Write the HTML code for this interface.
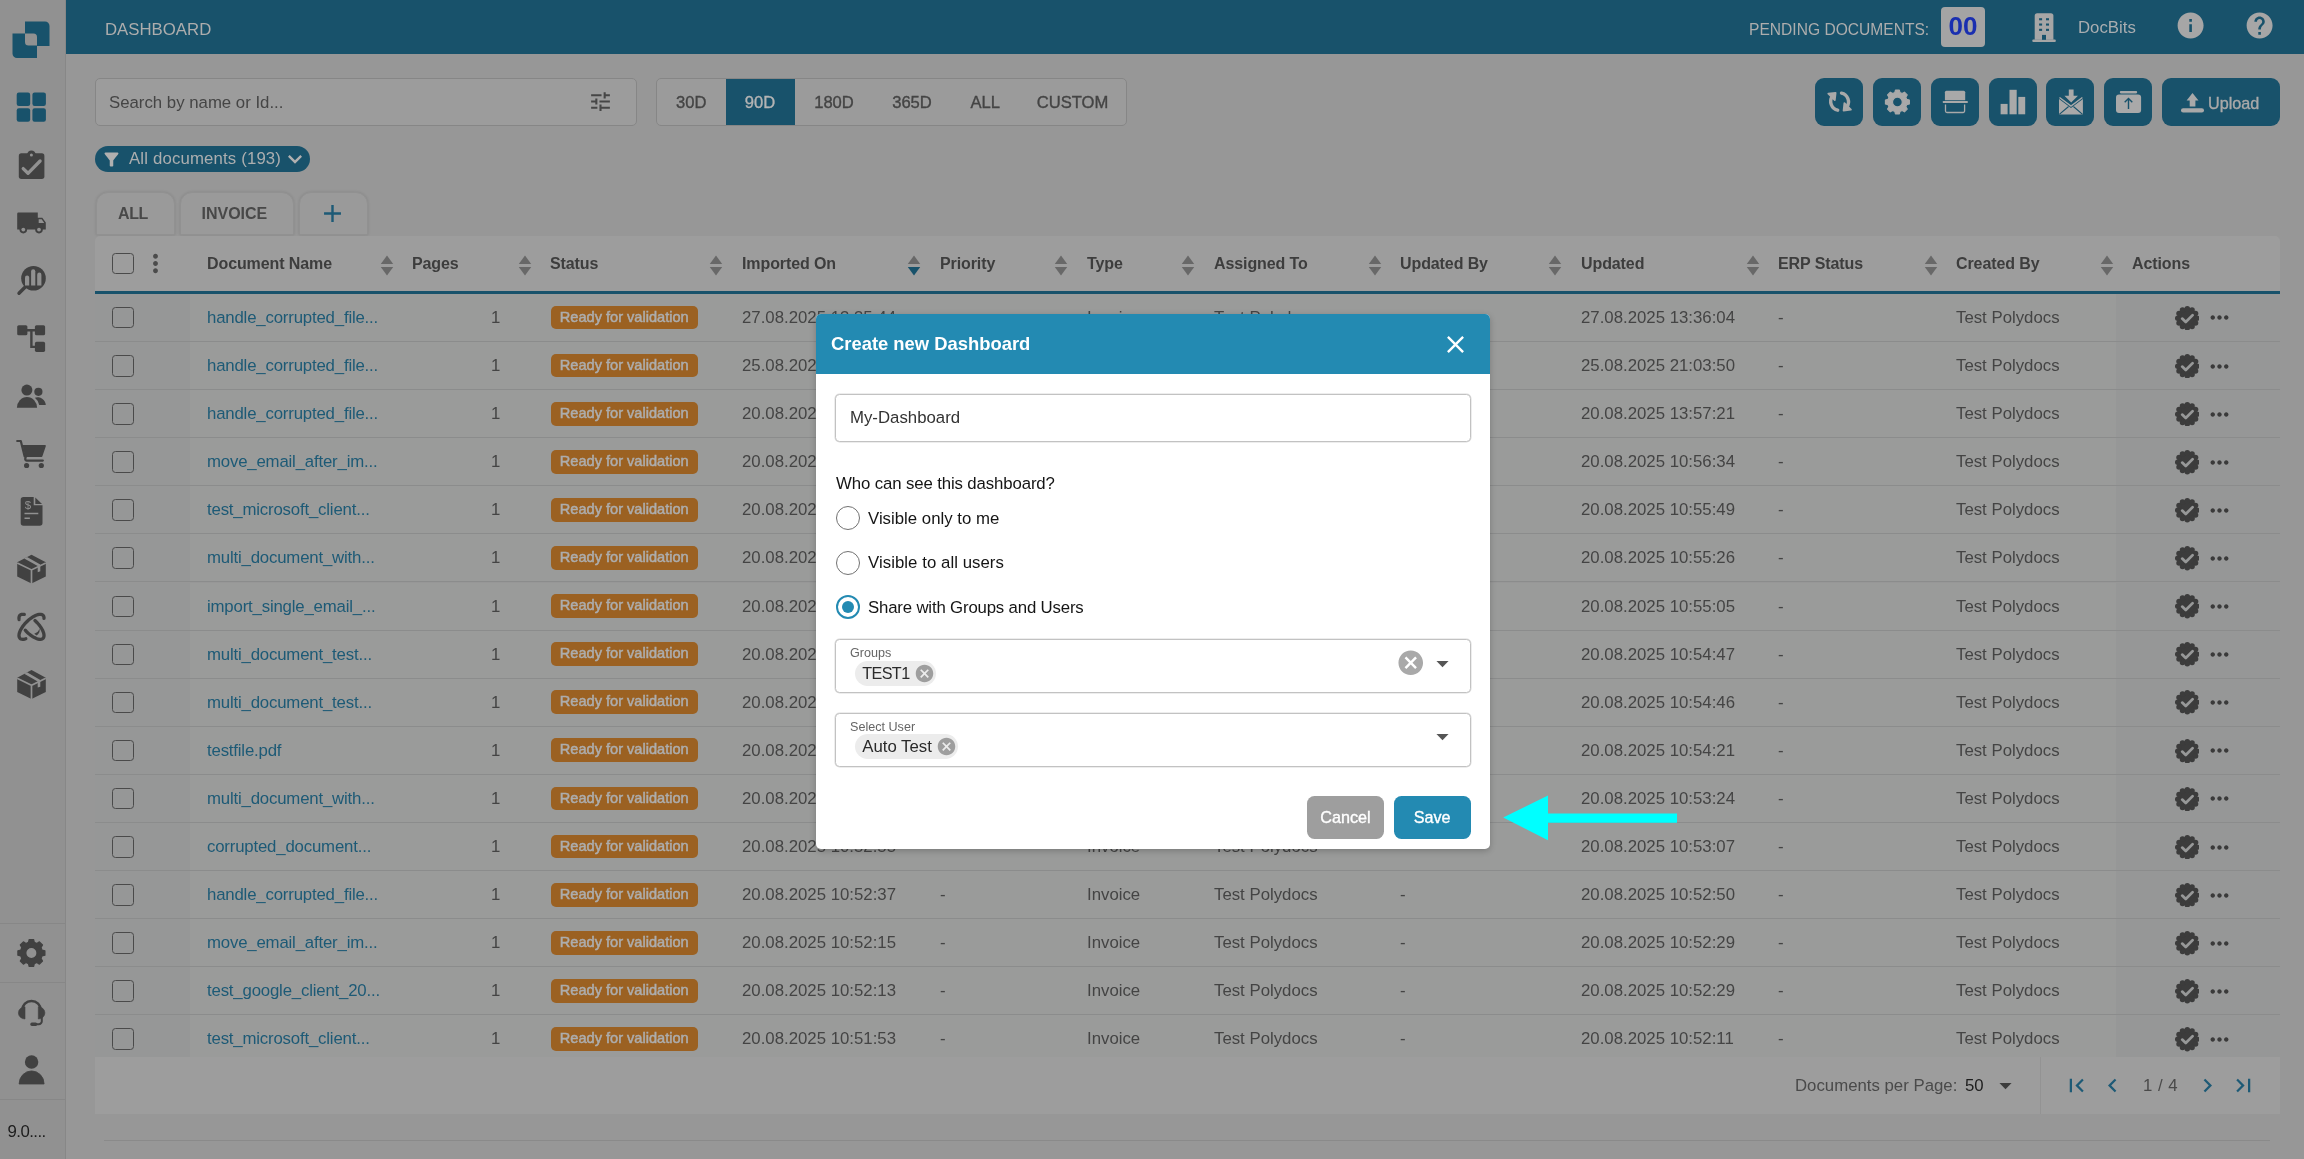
<!DOCTYPE html>
<html lang="en"><head><meta charset="utf-8"><title>Dashboard</title>
<style>
*{box-sizing:border-box}
html,body{margin:0;padding:0}
body{width:2304px;height:1159px;overflow:hidden;background:#979797;font-family:"Liberation Sans",sans-serif;color:#444;position:relative;font-size:16.8px}
.abs,.ic,.t{position:absolute}
.ic{display:block}
.t{white-space:nowrap;line-height:20px}
#side{left:0;top:0;width:66px;height:1159px;background:#919191;border-right:1px solid #878787}
#top{left:66px;top:0;width:2238px;height:54px;background:#18526b}
.box{position:absolute;border:1px solid #868686;border-radius:5px;background:#9c9c9c}
.abtn{position:absolute;top:78px;width:48px;height:48px;border-radius:9px;background:#18526b}
.tab{position:absolute;top:192px;height:43.300px;border:1px solid #919191;border-radius:12px 12px 0 0;background:#9a9a9a;box-shadow:0 0 3px rgba(0,0,0,.12)}
.th{font-weight:bold;font-size:16px;color:#3d3d3d;letter-spacing:-.1px}
.row{position:absolute;left:95px;width:2185px;height:48.1px;background:#9a9b9a;border-bottom:1px solid #8b8c8c}
.row .fz{position:absolute;top:0;height:100%;background:#969797}
.cb{position:absolute;width:21.6px;height:21.6px;border:1.800px solid #4a4a4a;border-radius:3.500px}
.badge{position:absolute;left:455.500px;top:11.700px;width:147.500px;height:23.800px;border-radius:5px;background:#9b6122;color:#adadad;font-weight:normal;-webkit-text-stroke:.5px currentColor;font-size:14.600px;line-height:23.800px;text-align:center;white-space:nowrap}
.c{position:absolute;top:14px;line-height:20px;white-space:nowrap}
.lk{color:#1d5a76;letter-spacing:-.18px}
.med{font-weight:normal;-webkit-text-stroke:.35px currentColor}
</style></head><body><div id="app" style="position:absolute;left:0;top:0;width:2304px;height:1159px;will-change:transform">
<div id="side" class="abs"></div><div class="abs" style="left:0;top:923px;width:65px;height:1px;background:#878787"></div><div class="abs" style="left:0;top:982px;width:65px;height:1px;background:#878787"></div><div class="abs" style="left:0;top:1099px;width:65px;height:1px;background:#878787"></div><div class="t" style="left:7.500px;top:1122px;color:#1c1c1c;font-size:16.8px;letter-spacing:-.55px">9.0....</div><svg class="ic" style="left:12px;top:21px;width:38px;height:38px" viewBox="0 0 38 38">
<path d="M13 0.500H33a4.500 4.500 0 0 1 4.500 4.500V25H25V16a3.500 3.500 0 0 0-3.500-3.500H13z" fill="#18526b"/>
<path d="M0.500 12.500H13V21a3.500 3.500 0 0 0 3.500 3.500H25V37H5a4.500 4.500 0 0 1-4.500-4.500z" fill="#18526b"/></svg><svg class="ic" style="left:0;top:0;width:66px;height:1159px" viewBox="0 0 66 1159"><rect x="16.7" y="92.5" width="13.500" height="13.500" rx="2.200" fill="#18526b"/><rect x="32.4" y="92.5" width="13.500" height="13.500" rx="2.200" fill="#18526b"/><rect x="16.7" y="108.2" width="13.500" height="13.500" rx="2.200" fill="#18526b"/><rect x="32.4" y="108.2" width="13.500" height="13.500" rx="2.200" fill="#18526b"/><circle cx="31.400" cy="154.800" r="4.400" fill="#414141"/><rect x="18.800" y="153.300" width="25.600" height="25.600" rx="2.600" fill="#414141"/><circle cx="31.400" cy="155" r="1.500" fill="#919191"/><path d="M23.200 168.600L28 173.300L40.100 161" stroke="#919191" stroke-width="3.300" fill="none" stroke-linecap="round" stroke-linejoin="round"/><path d="M18.400 212.600H37.800V217.800H42.300L45.800 222.600V229.400H17.200V213.800a1.200 1.200 0 0 1 1.200-1.200z" fill="#414141"/><path d="M38.700 219.300H41.700L44.200 222.900H38.700z" fill="#919191"/><circle cx="23.3" cy="229.600" r="3.800" fill="#414141"/><circle cx="23.3" cy="229.600" r="1.900" fill="#919191"/><circle cx="39" cy="229.600" r="3.800" fill="#414141"/><circle cx="39" cy="229.600" r="1.900" fill="#919191"/><circle cx="33.500" cy="278.200" r="12.300" fill="#414141"/><path d="M19 293.200L25.500 286.800" stroke="#414141" stroke-width="3.400" stroke-linecap="round"/><path d="M25 285.400V277.5a2.100 2.100 0 0 1 4.200 0V285.400z" fill="#919191"/><path d="M31.1 285.400V271.3a2.100 2.100 0 0 1 4.200 0V285.400z" fill="#919191"/><path d="M37.2 285.400V274.70000000000005a2.100 2.100 0 0 1 4.200 0V285.400z" fill="#919191"/><rect x="17.2" y="325.2" width="10.200" height="10.100" rx="1.600" fill="#414141"/><rect x="34.9" y="325.2" width="10.200" height="10.100" rx="1.600" fill="#414141"/><rect x="34.9" y="341.8" width="10.200" height="10.100" rx="1.600" fill="#414141"/><path d="M27 330.200H35.500M31.400 330.200V346.900H35.500" stroke="#414141" stroke-width="2.400" fill="none"/><circle cx="26.900" cy="390.100" r="5.500" fill="#414141"/><path d="M16.900 407.800a10.100 10.800 0 0 1 20.200 0z" fill="#414141"/><circle cx="38.400" cy="391.800" r="4.100" fill="#414141"/><path d="M34.900 397.700a8.300 8 0 0 1 10.900 7.200H39.200a12.500 12 0 0 0-4.300-7.200z" fill="#414141"/><path d="M17.200 441H20.800L24.600 456.300" stroke="#414141" stroke-width="2.200" fill="none" stroke-linecap="round" stroke-linejoin="round"/><path d="M22.500 445H44.800a1 1 0 0 1 1 1.300L42.400 456.200a1 1 0 0 1-1 .7H25.400z" fill="#414141"/><path d="M25.800 456.500L25.300 458.600a1.600 1.600 0 0 0 1.600 2H42.800" stroke="#414141" stroke-width="2.300" fill="none" stroke-linecap="round"/><circle cx="26.600" cy="465.500" r="2.600" fill="#414141"/><circle cx="41.300" cy="465.500" r="2.600" fill="#414141"/><path d="M23.500 496.900H33.700V505.300H42.500V523a2.800 2.800 0 0 1-2.800 2.800H23.500a2.800 2.800 0 0 1-2.800-2.800V499.700a2.800 2.800 0 0 1 2.800-2.800z" fill="#414141"/><path d="M35.300 497.500L42 503.900H35.300z" fill="#414141"/><path d="M24.500 513.500H38.300M24.500 518.200H29.900" stroke="#919191" stroke-width="1.400"/><text x="28" y="508.600" font-family="Liberation Sans, sans-serif" font-size="11.500" fill="#919191" text-anchor="middle">$</text><path d="M17.200 562.3L31.500 554.7L45.800 562.3V576.6L31.500 583.5L17.200 576.6z" fill="#414141"/><path d="M17.200 562.9L31.500 569.9L45.800 562.9M31.500 569.9V584" stroke="#919191" stroke-width="1.700" fill="none"/><path d="M24.200 558.4L27 556.9L40.300 564.5V571.3L37.700 572.2V566.1z" fill="#919191"/><path d="M17.200 677.7L31.500 670.1L45.800 677.7V692.0L31.500 698.9L17.200 692.0z" fill="#414141"/><path d="M17.200 678.3L31.500 685.3L45.800 678.3M31.500 685.3V699.4" stroke="#919191" stroke-width="1.700" fill="none"/><path d="M24.200 673.8L27 672.3L40.300 679.9V686.7L37.700 687.6V681.5z" fill="#919191"/><path d="M25.81 638.77L24.65 639.09L23.57 639.27L22.58 639.31L21.70 639.21L20.92 638.97L20.27 638.58L19.74 638.07L19.35 637.42L19.10 636.65L18.99 635.77L19.02 634.79L19.20 633.72L19.51 632.57L19.96 631.35L20.55 630.08L21.25 628.77L22.08 627.44L23.01 626.10L24.04 624.77L25.16 623.47L26.35 622.20L27.59 620.98L28.88 619.83L30.20 618.76L31.54 617.79L32.87 616.91L34.19 616.15L35.48 615.51L36.73 615.00L37.91 614.62L39.02 614.38L40.04 614.29L40.97 614.33L41.79 614.52L42.49 614.85L43.07 615.32L43.51 615.91L43.82 616.64L43.98 617.47L44.01 618.42" stroke="#414141" stroke-width="3.300" fill="none" stroke-linecap="round"/><path d="M34.94 620.55L35.94 621.49L36.92 622.47L37.85 623.48L38.74 624.51L39.58 625.56L40.36 626.62L41.07 627.67L41.72 628.73L42.29 629.77L42.79 630.78L43.21 631.77L43.54 632.73L43.79 633.64L43.94 634.50L44.01 635.30L43.99 636.05L43.88 636.73L43.68 637.34L43.40 637.87L43.03 638.33L42.57 638.70L42.04 638.98L41.43 639.18L40.75 639.29L40.00 639.31L39.20 639.24L38.34 639.09L37.43 638.84L36.47 638.51L35.48 638.09L34.47 637.59L33.43 637.02L32.37 636.37L31.32 635.66L30.26 634.88L29.21 634.04L28.18 633.15L27.17 632.22L26.19 631.24L25.25 630.24" stroke="#414141" stroke-width="3.300" fill="none" stroke-linecap="round"/><path d="M19.14 619.61L19.09 619.33L19.05 619.05L19.02 618.78L19.00 618.51L18.99 618.26L18.98 618.00L18.99 617.76L19.01 617.52L19.04 617.29L19.08 617.07L19.12 616.85L19.18 616.64L19.25 616.44L19.32 616.25L19.41 616.07L19.50 615.89L19.61 615.72L19.72 615.56L19.84 615.41L19.97 615.27L20.11 615.14L20.26 615.02L20.42 614.91L20.59 614.80L20.77 614.71L20.95 614.62L21.14 614.55L21.34 614.48L21.55 614.42L21.77 614.38L21.99 614.34L22.22 614.31L22.46 614.29L22.70 614.28L22.96 614.29L23.21 614.30L23.48 614.32L23.75 614.35L24.03 614.39L24.31 614.44" stroke="#414141" stroke-width="3.300" fill="none" stroke-linecap="round"/><path d="M34.200 633.700Q38.600 632.600 39.400 628.600Q40.400 633 36.700 635.400z" fill="#414141"/></svg><svg class="ic" style="left:8px;top:929px;width:48px;height:48px" viewBox="8 929 48 48"><path d="M42.00 950.06L44.92 950.81L44.92 955.19L42.00 955.94L40.97 958.42L42.51 961.01L39.41 964.11L36.82 962.57L34.34 963.60L33.59 966.52L29.21 966.52L28.46 963.60L25.98 962.57L23.39 964.11L20.29 961.01L21.83 958.42L20.80 955.94L17.88 955.19L17.88 950.81L20.80 950.06L21.83 947.58L20.29 944.99L23.39 941.89L25.98 943.43L28.46 942.40L29.21 939.48L33.59 939.48L34.34 942.40L36.82 943.43L39.41 941.89L42.51 944.99L40.97 947.58zM25.80 953a5.6 5.6 0 1 0 11.2 0a5.6 5.6 0 1 0 -11.2 0z" fill="#414141" fill-rule="evenodd" stroke="#414141" stroke-width="1.200" stroke-linejoin="round"/></svg><svg class="ic" style="left:8px;top:990px;width:48px;height:100px" viewBox="8 990 48 100"><path d="M22.200 1010.300a9.300 9.300 0 0 1 18.600 0" stroke="#414141" stroke-width="2.500" fill="none"/><path d="M25 1006.800V1019a6.600 6.100 0 0 1 0-12.200zM38.300 1006.800V1019a6.600 6.100 0 0 0 0-12.200z" fill="#414141" stroke="#414141" stroke-width=".6"/><path d="M41.800 1017V1021.200a3 3 0 0 1-3 3H33" stroke="#414141" stroke-width="2" fill="none"/><rect x="30.300" y="1022.500" width="7" height="3.400" rx="1.600" fill="#414141"/><circle cx="31.600" cy="1062" r="6.700" fill="#414141"/><path d="M19.100 1084a12.500 13.100 0 0 1 25 0z" fill="#414141" stroke="#414141" stroke-width=".8" stroke-linejoin="round"/></svg><div id="top" class="abs"></div><div class="t" style="left:105px;top:20px;font-size:16.8px;color:#adadad">DASHBOARD</div><div class="t" style="left:1749px;top:19.500px;font-size:15.6px;color:#adadad">PENDING DOCUMENTS:</div><div class="abs" style="left:1941px;top:7px;width:44px;height:40px;border-radius:4px;background:#a4a4a4"></div><div class="t" style="left:1941px;top:12px;width:44px;text-align:center;font-size:26px;font-weight:bold;color:#1a2fb0;line-height:28px">00</div><div class="t" style="left:2078px;top:17.500px;font-size:16.8px;color:#a9adb0">DocBits</div><svg class="ic" style="left:2030px;top:10px;width:28px;height:34px" viewBox="2030 10 28 34"><path d="M2037.200 13.300H2050.900a2.500 2.500 0 0 1 2.500 2.500V39.800H2034.700V15.800a2.500 2.500 0 0 1 2.500-2.500z" fill="#a6a6a6"/><rect x="2032.300" y="39.600" width="23.500" height="2.300" rx="1" fill="#a6a6a6"/><g fill="#18526b"><rect x="2039.100" y="18.200" width="3" height="2.100"/><rect x="2046" y="18.200" width="3" height="2.100"/><rect x="2039.100" y="23.500" width="3" height="2.100"/><rect x="2046" y="23.500" width="3" height="2.100"/><rect x="2039.100" y="28.800" width="3" height="2.100"/><rect x="2046" y="28.800" width="3" height="2.100"/><rect x="2042" y="34.900" width="4" height="4.900"/></g></svg><svg class="ic" style="left:2174.6px;top:9.6px;width:31.2px;height:31.2px;" viewBox="0 0 24 24" fill="#a6a6a6"><path d="M12 2C6.48 2 2 6.48 2 12s4.48 10 10 10 10-4.48 10-10S17.52 2 12 2zm1 15h-2v-6h2v6zm0-8h-2V7h2v2z"/></svg><svg class="ic" style="left:2243.9px;top:9.6px;width:31.2px;height:31.2px;" viewBox="0 0 24 24" fill="#a6a6a6"><path d="M12 2C6.48 2 2 6.48 2 12s4.48 10 10 10 10-4.48 10-10S17.52 2 12 2zm1 17h-2v-2h2v2zm2.07-7.75l-.9.92C13.45 12.9 13 13.5 13 15h-2v-.5c0-1.1.45-2.1 1.17-2.83l1.24-1.26c.37-.36.59-.86.59-1.41 0-1.1-.9-2-2-2s-2 .9-2 2H8c0-2.21 1.79-4 4-4s4 1.79 4 4c0 .88-.36 1.68-.93 2.25z"/></svg><div class="box" style="left:95px;top:78px;width:542px;height:48px"></div><div class="t" style="left:109px;top:92.700px;font-size:16.8px;color:#454545">Search by name or Id...</div><svg class="ic" style="left:588.0px;top:89.0px;width:25px;height:25px;" viewBox="0 0 24 24" fill="#464646"><path d="M3 17v2h6v-2H3zM3 5v2h10V5H3zm10 16v-2h8v-2h-8v-2h-2v6h2zM7 9v2H3v2h4v2h2V9H7zm14 4v-2H11v2h10zm-6-4h2V7h4V5h-4V3h-2v6z"/></svg><div class="box" style="left:656px;top:78px;width:471px;height:48px;background:#9b9b9b"></div><div class="abs" style="left:726px;top:79px;width:68.500px;height:46px;background:#18526b"></div><div class="t med" style="left:641.2px;top:92.800px;width:100px;text-align:center;font-size:16.600px;color:#444">30D</div><div class="t med" style="left:710px;top:92.800px;width:100px;text-align:center;font-size:16.600px;color:#b4b4b4">90D</div><div class="t med" style="left:784px;top:92.800px;width:100px;text-align:center;font-size:16.600px;color:#444">180D</div><div class="t med" style="left:862px;top:92.800px;width:100px;text-align:center;font-size:16.600px;color:#444">365D</div><div class="t med" style="left:935.2px;top:92.800px;width:100px;text-align:center;font-size:16.600px;color:#444">ALL</div><div class="t med" style="left:1022.5px;top:92.800px;width:100px;text-align:center;font-size:16.600px;color:#444">CUSTOM</div><div class="abtn" style="left:1815px"></div><div class="abtn" style="left:1873px"></div><div class="abtn" style="left:1931px"></div><div class="abtn" style="left:1988.5px"></div><div class="abtn" style="left:2046px"></div><div class="abtn" style="left:2104px"></div><div class="abtn" style="left:2162px;width:118px"></div><svg class="ic" style="left:1819px;top:82px;width:40px;height:40px" viewBox="0 0 40 40"><path d="M18.700 28.200A8.900 8.900 0 0 1 13.400 14.300" stroke="#a9a9a9" stroke-width="3.400" fill="none" stroke-linecap="round"/><path d="M9.300 11.700L16.600 10.800L15.800 18.200z" fill="#a9a9a9" stroke="#a9a9a9" stroke-width="1.800" stroke-linejoin="round"/><g transform="rotate(180 20.600 19.700)"><path d="M18.700 28.200A8.900 8.900 0 0 1 13.400 14.300" stroke="#a9a9a9" stroke-width="3.400" fill="none" stroke-linecap="round"/><path d="M9.300 11.700L16.600 10.800L15.800 18.200z" fill="#a9a9a9" stroke="#a9a9a9" stroke-width="1.800" stroke-linejoin="round"/></g></svg><svg class="ic" style="left:1873px;top:78px;width:48px;height:48px" viewBox="1873 78 48 48"><path d="M1906.75 99.41L1909.34 100.07L1909.34 103.93L1906.75 104.59L1905.84 106.78L1907.21 109.08L1904.48 111.81L1902.18 110.44L1899.99 111.35L1899.33 113.94L1895.47 113.94L1894.81 111.35L1892.62 110.44L1890.32 111.81L1887.59 109.08L1888.96 106.78L1888.05 104.59L1885.46 103.93L1885.46 100.07L1888.05 99.41L1888.96 97.22L1887.59 94.92L1890.32 92.19L1892.62 93.56L1894.81 92.65L1895.47 90.06L1899.33 90.06L1899.99 92.65L1902.18 93.56L1904.48 92.19L1907.21 94.92L1905.84 97.22zM1892.50 102a4.9 4.9 0 1 0 9.8 0a4.9 4.9 0 1 0 -9.8 0z" fill="#a9a9a9" fill-rule="evenodd" stroke="#a9a9a9" stroke-width="1.200" stroke-linejoin="round"/></svg><svg class="ic" style="left:1931px;top:78px;width:48px;height:48px" viewBox="1931 78 48 48"><path d="M1946.400 90.800H1963.700a1.500 1.500 0 0 1 1.500 1.500V100.200H1944.900V92.300a1.500 1.500 0 0 1 1.500-1.500z" fill="#a9a9a9"/><rect x="1942.800" y="101" width="25" height="2.100" rx=".6" fill="#a9a9a9"/><path d="M1945.500 104.400V111a1.500 1.500 0 0 0 1.500 1.500H1963.100a1.500 1.500 0 0 0 1.500-1.500V104.400" stroke="#a9a9a9" stroke-width="1.300" fill="none"/></svg><svg class="ic" style="left:1988px;top:78px;width:48px;height:48px" viewBox="1988 78 48 48" fill="#a9a9a9"><rect x="2000.600" y="103.900" width="7" height="10.400"/><rect x="2009.500" y="89.800" width="7.200" height="24.500"/><rect x="2018.300" y="96.900" width="6.900" height="17.400"/></svg><svg class="ic" style="left:2046px;top:78px;width:48px;height:48px" viewBox="2046 78 48 48"><path d="M2059 99L2071 108L2082.900 99V114.500H2059z" fill="#a9a9a9"/><path d="M2059.500 97.500L2071 106L2082.400 97.500" stroke="#a9a9a9" stroke-width="1.500" fill="none"/><path d="M2059.300 114.300L2068.600 106.500M2082.600 114.300L2073.400 106.500" stroke="#18526b" stroke-width="1.100" fill="none"/><path d="M2068.800 89.500H2073.600V95.800H2078L2071.200 102.600L2064.400 95.800H2068.800z" fill="#a9a9a9"/></svg><svg class="ic" style="left:2104px;top:78px;width:48px;height:48px" viewBox="2104 78 48 48"><rect x="2119.800" y="91.100" width="17.400" height="2.300" rx="1.100" fill="#a9a9a9"/><rect x="2116" y="94.400" width="25.100" height="18.500" rx="3" fill="#a9a9a9"/><path d="M2128.500 109V98.600M2124.700 102.300L2128.500 98.500L2132.300 102.300" stroke="#18526b" stroke-width="1.400" fill="none"/></svg><svg class="ic" style="left:2178px;top:88px;width:30px;height:28px" viewBox="2178 88 30 28" fill="#a9a9a9"><path d="M2192.500 92.900L2198.500 100.500H2195.400V106.400H2189.700V100.500H2186.600z"/><rect x="2181" y="108.200" width="23" height="4.300" rx="2.100"/></svg><div class="t med" style="left:2208px;top:93.400px;font-size:16.200px;color:#a9a9a9">Upload</div><div class="abs" style="left:95px;top:146px;width:215.400px;height:25.800px;border-radius:13px;background:#18526b"></div><svg class="ic" style="left:101.0px;top:148.8px;width:21px;height:21px;" viewBox="0 0 24 24" fill="#b0b0b0"><path d="M4.250 5.610C6.270 8.200 10 13 10 13v6c0 .55.45 1 1 1h2c.55 0 1-.45 1-1v-6s3.720-4.800 5.740-7.390c.51-.66.04-1.610-.79-1.610H5.040c-.83 0-1.300.95-.79 1.610z"/></svg><div class="t" style="left:129px;top:149px;font-size:16.8px;color:#acaeaf;letter-spacing:.15px">All documents (193)</div><svg class="ic" style="left:280.5px;top:144.8px;width:28px;height:28px;" viewBox="0 0 24 24" fill="#b0b0b0"><path d="M16.590 8.590L12 13.170 7.410 8.590 6 10l6 6 6-6z"/></svg><div class="tab" style="left:95.500px;width:79px"></div><div class="tab" style="left:179.500px;width:114px"></div><div class="tab" style="left:299px;width:68.500px"></div><div class="t" style="left:118px;top:203.800px;font-size:16px;font-weight:bold;color:#484848;letter-spacing:-.4px">ALL</div><div class="t" style="left:201.500px;top:203.800px;font-size:16px;font-weight:bold;color:#484848">INVOICE</div><svg class="ic" style="left:318.0px;top:199.2px;width:29px;height:29px;" viewBox="0 0 24 24" fill="#1d5a76"><path d="M19 13h-6v6h-2v-6H5v-2h6V5h2v6h6v2z"/></svg><div class="abs" style="left:95px;top:236px;width:2185px;height:55.500px;background:#9d9d9d;border-radius:5px 5px 0 0"></div><div class="abs" style="left:95px;top:290.900px;width:2185px;height:2.800px;background:#18526b"></div><div class="cb" style="left:112px;top:252.700px"></div><svg class="ic" style="left:140.5px;top:249.0px;width:29px;height:29px;" viewBox="0 0 24 24" fill="#4b4b4b"><path d="M12 8c1.1 0 2-.9 2-2s-.9-2-2-2-2 .9-2 2 .9 2 2 2zm0 2c-1.1 0-2 .9-2 2s.9 2 2 2 2-.9 2-2-.9-2-2-2zm0 6c-1.1 0-2 .9-2 2s.9 2 2 2 2-.9 2-2-.9-2-2-2z"/></svg><div class="t th" style="left:207px;top:253.800px">Document Name</div><svg class="ic" style="left:379.7px;top:255.300px;width:14px;height:21px" viewBox="0 0 14 21"><path d="M7 0.500L13.200 9H0.800z" fill="#686868"/><path d="M7 20.500L13.200 12H0.800z" fill="#686868"/></svg><div class="t th" style="left:412px;top:253.800px">Pages</div><svg class="ic" style="left:518.2px;top:255.300px;width:14px;height:21px" viewBox="0 0 14 21"><path d="M7 0.500L13.200 9H0.800z" fill="#686868"/><path d="M7 20.500L13.200 12H0.800z" fill="#686868"/></svg><div class="t th" style="left:550px;top:253.800px">Status</div><svg class="ic" style="left:709.2px;top:255.300px;width:14px;height:21px" viewBox="0 0 14 21"><path d="M7 0.500L13.200 9H0.800z" fill="#686868"/><path d="M7 20.500L13.200 12H0.800z" fill="#686868"/></svg><div class="t th" style="left:742px;top:253.800px">Imported On</div><svg class="ic" style="left:907.2px;top:255.300px;width:14px;height:21px" viewBox="0 0 14 21"><path d="M7 0.500L13.200 9H0.800z" fill="#686868"/><path d="M7 20.500L13.200 12H0.800z" fill="#18526b"/></svg><div class="t th" style="left:940px;top:253.800px">Priority</div><svg class="ic" style="left:1054.2px;top:255.300px;width:14px;height:21px" viewBox="0 0 14 21"><path d="M7 0.500L13.200 9H0.800z" fill="#686868"/><path d="M7 20.500L13.200 12H0.800z" fill="#686868"/></svg><div class="t th" style="left:1087px;top:253.800px">Type</div><svg class="ic" style="left:1181.2px;top:255.300px;width:14px;height:21px" viewBox="0 0 14 21"><path d="M7 0.500L13.200 9H0.800z" fill="#686868"/><path d="M7 20.500L13.200 12H0.800z" fill="#686868"/></svg><div class="t th" style="left:1214px;top:253.800px">Assigned To</div><svg class="ic" style="left:1367.7px;top:255.300px;width:14px;height:21px" viewBox="0 0 14 21"><path d="M7 0.500L13.200 9H0.800z" fill="#686868"/><path d="M7 20.500L13.200 12H0.800z" fill="#686868"/></svg><div class="t th" style="left:1400px;top:253.800px">Updated By</div><svg class="ic" style="left:1548.2px;top:255.300px;width:14px;height:21px" viewBox="0 0 14 21"><path d="M7 0.500L13.200 9H0.800z" fill="#686868"/><path d="M7 20.500L13.200 12H0.800z" fill="#686868"/></svg><div class="t th" style="left:1581px;top:253.800px">Updated</div><svg class="ic" style="left:1746.2px;top:255.300px;width:14px;height:21px" viewBox="0 0 14 21"><path d="M7 0.500L13.200 9H0.800z" fill="#686868"/><path d="M7 20.500L13.200 12H0.800z" fill="#686868"/></svg><div class="t th" style="left:1778px;top:253.800px">ERP Status</div><svg class="ic" style="left:1923.7px;top:255.300px;width:14px;height:21px" viewBox="0 0 14 21"><path d="M7 0.500L13.200 9H0.800z" fill="#686868"/><path d="M7 20.500L13.200 12H0.800z" fill="#686868"/></svg><div class="t th" style="left:1956px;top:253.800px">Created By</div><svg class="ic" style="left:2099.7px;top:255.300px;width:14px;height:21px" viewBox="0 0 14 21"><path d="M7 0.500L13.200 9H0.800z" fill="#686868"/><path d="M7 20.500L13.200 12H0.800z" fill="#686868"/></svg><div class="t th" style="left:2132px;top:253.800px">Actions</div><div class="abs" style="left:0;top:0;width:2304px;height:1057px;overflow:hidden"><div class="row" style="top:293.9px"><div class="fz" style="left:0;width:95px"></div><div class="fz" style="left:2021px;width:164px"></div><div class="cb" style="left:17px;top:13px"></div><div class="c lk" style="left:112px">handle_corrupted_file...</div><div class="c" style="left:396px">1</div><div class="badge">Ready for validation</div><div class="c" style="left:647px">27.08.2025 13:35:44</div><div class="c" style="left:845px">-</div><div class="c" style="left:992px">Invoice</div><div class="c" style="left:1119px">Test Polydocs</div><div class="c" style="left:1305px">-</div><div class="c" style="left:1486px">27.08.2025 13:36:04</div><div class="c" style="left:1683px">-</div><div class="c" style="left:1861px">Test Polydocs</div><svg class="ic" style="left:2079.700px;top:11.800px;width:24.600px;height:24.600px" viewBox="0 0 24 24"><g fill="#3c3c3c"><circle cx="12" cy="12" r="9.800"/><circle cx="21.30" cy="12.00" r="2.700"/><circle cx="20.05" cy="16.65" r="2.700"/><circle cx="16.65" cy="20.05" r="2.700"/><circle cx="12.00" cy="21.30" r="2.700"/><circle cx="7.35" cy="20.05" r="2.700"/><circle cx="3.95" cy="16.65" r="2.700"/><circle cx="2.70" cy="12.00" r="2.700"/><circle cx="3.95" cy="7.35" r="2.700"/><circle cx="7.35" cy="3.95" r="2.700"/><circle cx="12.00" cy="2.70" r="2.700"/><circle cx="16.65" cy="3.95" r="2.700"/><circle cx="20.05" cy="7.35" r="2.700"/></g><path d="M7 12.300L10.500 15.700L17.200 8.900" stroke="#979898" stroke-width="2.700" fill="none" stroke-linecap="round" stroke-linejoin="round"/></svg><svg class="ic" style="left:2111.0px;top:10.5px;width:27px;height:27px;" viewBox="0 0 24 24" fill="#3a3a3a"><path d="M6 10c-1.1 0-2 .9-2 2s.9 2 2 2 2-.9 2-2-.9-2-2-2zm12 0c-1.1 0-2 .9-2 2s.9 2 2 2 2-.9 2-2-.9-2-2-2zm-6 0c-1.1 0-2 .9-2 2s.9 2 2 2 2-.9 2-2-.9-2-2-2z"/></svg></div><div class="row" style="top:342.0px"><div class="fz" style="left:0;width:95px"></div><div class="fz" style="left:2021px;width:164px"></div><div class="cb" style="left:17px;top:13px"></div><div class="c lk" style="left:112px">handle_corrupted_file...</div><div class="c" style="left:396px">1</div><div class="badge">Ready for validation</div><div class="c" style="left:647px">25.08.2025 21:03:31</div><div class="c" style="left:845px">-</div><div class="c" style="left:992px">Invoice</div><div class="c" style="left:1119px">Test Polydocs</div><div class="c" style="left:1305px">-</div><div class="c" style="left:1486px">25.08.2025 21:03:50</div><div class="c" style="left:1683px">-</div><div class="c" style="left:1861px">Test Polydocs</div><svg class="ic" style="left:2079.700px;top:11.800px;width:24.600px;height:24.600px" viewBox="0 0 24 24"><g fill="#3c3c3c"><circle cx="12" cy="12" r="9.800"/><circle cx="21.30" cy="12.00" r="2.700"/><circle cx="20.05" cy="16.65" r="2.700"/><circle cx="16.65" cy="20.05" r="2.700"/><circle cx="12.00" cy="21.30" r="2.700"/><circle cx="7.35" cy="20.05" r="2.700"/><circle cx="3.95" cy="16.65" r="2.700"/><circle cx="2.70" cy="12.00" r="2.700"/><circle cx="3.95" cy="7.35" r="2.700"/><circle cx="7.35" cy="3.95" r="2.700"/><circle cx="12.00" cy="2.70" r="2.700"/><circle cx="16.65" cy="3.95" r="2.700"/><circle cx="20.05" cy="7.35" r="2.700"/></g><path d="M7 12.300L10.500 15.700L17.200 8.900" stroke="#979898" stroke-width="2.700" fill="none" stroke-linecap="round" stroke-linejoin="round"/></svg><svg class="ic" style="left:2111.0px;top:10.5px;width:27px;height:27px;" viewBox="0 0 24 24" fill="#3a3a3a"><path d="M6 10c-1.1 0-2 .9-2 2s.9 2 2 2 2-.9 2-2-.9-2-2-2zm12 0c-1.1 0-2 .9-2 2s.9 2 2 2 2-.9 2-2-.9-2-2-2zm-6 0c-1.1 0-2 .9-2 2s.9 2 2 2 2-.9 2-2-.9-2-2-2z"/></svg></div><div class="row" style="top:390.1px"><div class="fz" style="left:0;width:95px"></div><div class="fz" style="left:2021px;width:164px"></div><div class="cb" style="left:17px;top:13px"></div><div class="c lk" style="left:112px">handle_corrupted_file...</div><div class="c" style="left:396px">1</div><div class="badge">Ready for validation</div><div class="c" style="left:647px">20.08.2025 13:57:02</div><div class="c" style="left:845px">-</div><div class="c" style="left:992px">Invoice</div><div class="c" style="left:1119px">Test Polydocs</div><div class="c" style="left:1305px">-</div><div class="c" style="left:1486px">20.08.2025 13:57:21</div><div class="c" style="left:1683px">-</div><div class="c" style="left:1861px">Test Polydocs</div><svg class="ic" style="left:2079.700px;top:11.800px;width:24.600px;height:24.600px" viewBox="0 0 24 24"><g fill="#3c3c3c"><circle cx="12" cy="12" r="9.800"/><circle cx="21.30" cy="12.00" r="2.700"/><circle cx="20.05" cy="16.65" r="2.700"/><circle cx="16.65" cy="20.05" r="2.700"/><circle cx="12.00" cy="21.30" r="2.700"/><circle cx="7.35" cy="20.05" r="2.700"/><circle cx="3.95" cy="16.65" r="2.700"/><circle cx="2.70" cy="12.00" r="2.700"/><circle cx="3.95" cy="7.35" r="2.700"/><circle cx="7.35" cy="3.95" r="2.700"/><circle cx="12.00" cy="2.70" r="2.700"/><circle cx="16.65" cy="3.95" r="2.700"/><circle cx="20.05" cy="7.35" r="2.700"/></g><path d="M7 12.300L10.500 15.700L17.200 8.900" stroke="#979898" stroke-width="2.700" fill="none" stroke-linecap="round" stroke-linejoin="round"/></svg><svg class="ic" style="left:2111.0px;top:10.5px;width:27px;height:27px;" viewBox="0 0 24 24" fill="#3a3a3a"><path d="M6 10c-1.1 0-2 .9-2 2s.9 2 2 2 2-.9 2-2-.9-2-2-2zm12 0c-1.1 0-2 .9-2 2s.9 2 2 2 2-.9 2-2-.9-2-2-2zm-6 0c-1.1 0-2 .9-2 2s.9 2 2 2 2-.9 2-2-.9-2-2-2z"/></svg></div><div class="row" style="top:438.2px"><div class="fz" style="left:0;width:95px"></div><div class="fz" style="left:2021px;width:164px"></div><div class="cb" style="left:17px;top:13px"></div><div class="c lk" style="left:112px">move_email_after_im...</div><div class="c" style="left:396px">1</div><div class="badge">Ready for validation</div><div class="c" style="left:647px">20.08.2025 10:56:16</div><div class="c" style="left:845px">-</div><div class="c" style="left:992px">Invoice</div><div class="c" style="left:1119px">Test Polydocs</div><div class="c" style="left:1305px">-</div><div class="c" style="left:1486px">20.08.2025 10:56:34</div><div class="c" style="left:1683px">-</div><div class="c" style="left:1861px">Test Polydocs</div><svg class="ic" style="left:2079.700px;top:11.800px;width:24.600px;height:24.600px" viewBox="0 0 24 24"><g fill="#3c3c3c"><circle cx="12" cy="12" r="9.800"/><circle cx="21.30" cy="12.00" r="2.700"/><circle cx="20.05" cy="16.65" r="2.700"/><circle cx="16.65" cy="20.05" r="2.700"/><circle cx="12.00" cy="21.30" r="2.700"/><circle cx="7.35" cy="20.05" r="2.700"/><circle cx="3.95" cy="16.65" r="2.700"/><circle cx="2.70" cy="12.00" r="2.700"/><circle cx="3.95" cy="7.35" r="2.700"/><circle cx="7.35" cy="3.95" r="2.700"/><circle cx="12.00" cy="2.70" r="2.700"/><circle cx="16.65" cy="3.95" r="2.700"/><circle cx="20.05" cy="7.35" r="2.700"/></g><path d="M7 12.300L10.500 15.700L17.200 8.900" stroke="#979898" stroke-width="2.700" fill="none" stroke-linecap="round" stroke-linejoin="round"/></svg><svg class="ic" style="left:2111.0px;top:10.5px;width:27px;height:27px;" viewBox="0 0 24 24" fill="#3a3a3a"><path d="M6 10c-1.1 0-2 .9-2 2s.9 2 2 2 2-.9 2-2-.9-2-2-2zm12 0c-1.1 0-2 .9-2 2s.9 2 2 2 2-.9 2-2-.9-2-2-2zm-6 0c-1.1 0-2 .9-2 2s.9 2 2 2 2-.9 2-2-.9-2-2-2z"/></svg></div><div class="row" style="top:486.3px"><div class="fz" style="left:0;width:95px"></div><div class="fz" style="left:2021px;width:164px"></div><div class="cb" style="left:17px;top:13px"></div><div class="c lk" style="left:112px">test_microsoft_client...</div><div class="c" style="left:396px">1</div><div class="badge">Ready for validation</div><div class="c" style="left:647px">20.08.2025 10:55:31</div><div class="c" style="left:845px">-</div><div class="c" style="left:992px">Invoice</div><div class="c" style="left:1119px">Test Polydocs</div><div class="c" style="left:1305px">-</div><div class="c" style="left:1486px">20.08.2025 10:55:49</div><div class="c" style="left:1683px">-</div><div class="c" style="left:1861px">Test Polydocs</div><svg class="ic" style="left:2079.700px;top:11.800px;width:24.600px;height:24.600px" viewBox="0 0 24 24"><g fill="#3c3c3c"><circle cx="12" cy="12" r="9.800"/><circle cx="21.30" cy="12.00" r="2.700"/><circle cx="20.05" cy="16.65" r="2.700"/><circle cx="16.65" cy="20.05" r="2.700"/><circle cx="12.00" cy="21.30" r="2.700"/><circle cx="7.35" cy="20.05" r="2.700"/><circle cx="3.95" cy="16.65" r="2.700"/><circle cx="2.70" cy="12.00" r="2.700"/><circle cx="3.95" cy="7.35" r="2.700"/><circle cx="7.35" cy="3.95" r="2.700"/><circle cx="12.00" cy="2.70" r="2.700"/><circle cx="16.65" cy="3.95" r="2.700"/><circle cx="20.05" cy="7.35" r="2.700"/></g><path d="M7 12.300L10.500 15.700L17.200 8.900" stroke="#979898" stroke-width="2.700" fill="none" stroke-linecap="round" stroke-linejoin="round"/></svg><svg class="ic" style="left:2111.0px;top:10.5px;width:27px;height:27px;" viewBox="0 0 24 24" fill="#3a3a3a"><path d="M6 10c-1.1 0-2 .9-2 2s.9 2 2 2 2-.9 2-2-.9-2-2-2zm12 0c-1.1 0-2 .9-2 2s.9 2 2 2 2-.9 2-2-.9-2-2-2zm-6 0c-1.1 0-2 .9-2 2s.9 2 2 2 2-.9 2-2-.9-2-2-2z"/></svg></div><div class="row" style="top:534.4px"><div class="fz" style="left:0;width:95px"></div><div class="fz" style="left:2021px;width:164px"></div><div class="cb" style="left:17px;top:13px"></div><div class="c lk" style="left:112px">multi_document_with...</div><div class="c" style="left:396px">1</div><div class="badge">Ready for validation</div><div class="c" style="left:647px">20.08.2025 10:55:08</div><div class="c" style="left:845px">-</div><div class="c" style="left:992px">Invoice</div><div class="c" style="left:1119px">Test Polydocs</div><div class="c" style="left:1305px">-</div><div class="c" style="left:1486px">20.08.2025 10:55:26</div><div class="c" style="left:1683px">-</div><div class="c" style="left:1861px">Test Polydocs</div><svg class="ic" style="left:2079.700px;top:11.800px;width:24.600px;height:24.600px" viewBox="0 0 24 24"><g fill="#3c3c3c"><circle cx="12" cy="12" r="9.800"/><circle cx="21.30" cy="12.00" r="2.700"/><circle cx="20.05" cy="16.65" r="2.700"/><circle cx="16.65" cy="20.05" r="2.700"/><circle cx="12.00" cy="21.30" r="2.700"/><circle cx="7.35" cy="20.05" r="2.700"/><circle cx="3.95" cy="16.65" r="2.700"/><circle cx="2.70" cy="12.00" r="2.700"/><circle cx="3.95" cy="7.35" r="2.700"/><circle cx="7.35" cy="3.95" r="2.700"/><circle cx="12.00" cy="2.70" r="2.700"/><circle cx="16.65" cy="3.95" r="2.700"/><circle cx="20.05" cy="7.35" r="2.700"/></g><path d="M7 12.300L10.500 15.700L17.200 8.900" stroke="#979898" stroke-width="2.700" fill="none" stroke-linecap="round" stroke-linejoin="round"/></svg><svg class="ic" style="left:2111.0px;top:10.5px;width:27px;height:27px;" viewBox="0 0 24 24" fill="#3a3a3a"><path d="M6 10c-1.1 0-2 .9-2 2s.9 2 2 2 2-.9 2-2-.9-2-2-2zm12 0c-1.1 0-2 .9-2 2s.9 2 2 2 2-.9 2-2-.9-2-2-2zm-6 0c-1.1 0-2 .9-2 2s.9 2 2 2 2-.9 2-2-.9-2-2-2z"/></svg></div><div class="row" style="top:582.5px"><div class="fz" style="left:0;width:95px"></div><div class="fz" style="left:2021px;width:164px"></div><div class="cb" style="left:17px;top:13px"></div><div class="c lk" style="left:112px">import_single_email_...</div><div class="c" style="left:396px">1</div><div class="badge">Ready for validation</div><div class="c" style="left:647px">20.08.2025 10:54:49</div><div class="c" style="left:845px">-</div><div class="c" style="left:992px">Invoice</div><div class="c" style="left:1119px">Test Polydocs</div><div class="c" style="left:1305px">-</div><div class="c" style="left:1486px">20.08.2025 10:55:05</div><div class="c" style="left:1683px">-</div><div class="c" style="left:1861px">Test Polydocs</div><svg class="ic" style="left:2079.700px;top:11.800px;width:24.600px;height:24.600px" viewBox="0 0 24 24"><g fill="#3c3c3c"><circle cx="12" cy="12" r="9.800"/><circle cx="21.30" cy="12.00" r="2.700"/><circle cx="20.05" cy="16.65" r="2.700"/><circle cx="16.65" cy="20.05" r="2.700"/><circle cx="12.00" cy="21.30" r="2.700"/><circle cx="7.35" cy="20.05" r="2.700"/><circle cx="3.95" cy="16.65" r="2.700"/><circle cx="2.70" cy="12.00" r="2.700"/><circle cx="3.95" cy="7.35" r="2.700"/><circle cx="7.35" cy="3.95" r="2.700"/><circle cx="12.00" cy="2.70" r="2.700"/><circle cx="16.65" cy="3.95" r="2.700"/><circle cx="20.05" cy="7.35" r="2.700"/></g><path d="M7 12.300L10.500 15.700L17.200 8.900" stroke="#979898" stroke-width="2.700" fill="none" stroke-linecap="round" stroke-linejoin="round"/></svg><svg class="ic" style="left:2111.0px;top:10.5px;width:27px;height:27px;" viewBox="0 0 24 24" fill="#3a3a3a"><path d="M6 10c-1.1 0-2 .9-2 2s.9 2 2 2 2-.9 2-2-.9-2-2-2zm12 0c-1.1 0-2 .9-2 2s.9 2 2 2 2-.9 2-2-.9-2-2-2zm-6 0c-1.1 0-2 .9-2 2s.9 2 2 2 2-.9 2-2-.9-2-2-2z"/></svg></div><div class="row" style="top:630.6px"><div class="fz" style="left:0;width:95px"></div><div class="fz" style="left:2021px;width:164px"></div><div class="cb" style="left:17px;top:13px"></div><div class="c lk" style="left:112px">multi_document_test...</div><div class="c" style="left:396px">1</div><div class="badge">Ready for validation</div><div class="c" style="left:647px">20.08.2025 10:54:30</div><div class="c" style="left:845px">-</div><div class="c" style="left:992px">Invoice</div><div class="c" style="left:1119px">Test Polydocs</div><div class="c" style="left:1305px">-</div><div class="c" style="left:1486px">20.08.2025 10:54:47</div><div class="c" style="left:1683px">-</div><div class="c" style="left:1861px">Test Polydocs</div><svg class="ic" style="left:2079.700px;top:11.800px;width:24.600px;height:24.600px" viewBox="0 0 24 24"><g fill="#3c3c3c"><circle cx="12" cy="12" r="9.800"/><circle cx="21.30" cy="12.00" r="2.700"/><circle cx="20.05" cy="16.65" r="2.700"/><circle cx="16.65" cy="20.05" r="2.700"/><circle cx="12.00" cy="21.30" r="2.700"/><circle cx="7.35" cy="20.05" r="2.700"/><circle cx="3.95" cy="16.65" r="2.700"/><circle cx="2.70" cy="12.00" r="2.700"/><circle cx="3.95" cy="7.35" r="2.700"/><circle cx="7.35" cy="3.95" r="2.700"/><circle cx="12.00" cy="2.70" r="2.700"/><circle cx="16.65" cy="3.95" r="2.700"/><circle cx="20.05" cy="7.35" r="2.700"/></g><path d="M7 12.300L10.500 15.700L17.200 8.900" stroke="#979898" stroke-width="2.700" fill="none" stroke-linecap="round" stroke-linejoin="round"/></svg><svg class="ic" style="left:2111.0px;top:10.5px;width:27px;height:27px;" viewBox="0 0 24 24" fill="#3a3a3a"><path d="M6 10c-1.1 0-2 .9-2 2s.9 2 2 2 2-.9 2-2-.9-2-2-2zm12 0c-1.1 0-2 .9-2 2s.9 2 2 2 2-.9 2-2-.9-2-2-2zm-6 0c-1.1 0-2 .9-2 2s.9 2 2 2 2-.9 2-2-.9-2-2-2z"/></svg></div><div class="row" style="top:678.7px"><div class="fz" style="left:0;width:95px"></div><div class="fz" style="left:2021px;width:164px"></div><div class="cb" style="left:17px;top:13px"></div><div class="c lk" style="left:112px">multi_document_test...</div><div class="c" style="left:396px">1</div><div class="badge">Ready for validation</div><div class="c" style="left:647px">20.08.2025 10:54:28</div><div class="c" style="left:845px">-</div><div class="c" style="left:992px">Invoice</div><div class="c" style="left:1119px">Test Polydocs</div><div class="c" style="left:1305px">-</div><div class="c" style="left:1486px">20.08.2025 10:54:46</div><div class="c" style="left:1683px">-</div><div class="c" style="left:1861px">Test Polydocs</div><svg class="ic" style="left:2079.700px;top:11.800px;width:24.600px;height:24.600px" viewBox="0 0 24 24"><g fill="#3c3c3c"><circle cx="12" cy="12" r="9.800"/><circle cx="21.30" cy="12.00" r="2.700"/><circle cx="20.05" cy="16.65" r="2.700"/><circle cx="16.65" cy="20.05" r="2.700"/><circle cx="12.00" cy="21.30" r="2.700"/><circle cx="7.35" cy="20.05" r="2.700"/><circle cx="3.95" cy="16.65" r="2.700"/><circle cx="2.70" cy="12.00" r="2.700"/><circle cx="3.95" cy="7.35" r="2.700"/><circle cx="7.35" cy="3.95" r="2.700"/><circle cx="12.00" cy="2.70" r="2.700"/><circle cx="16.65" cy="3.95" r="2.700"/><circle cx="20.05" cy="7.35" r="2.700"/></g><path d="M7 12.300L10.500 15.700L17.200 8.900" stroke="#979898" stroke-width="2.700" fill="none" stroke-linecap="round" stroke-linejoin="round"/></svg><svg class="ic" style="left:2111.0px;top:10.5px;width:27px;height:27px;" viewBox="0 0 24 24" fill="#3a3a3a"><path d="M6 10c-1.1 0-2 .9-2 2s.9 2 2 2 2-.9 2-2-.9-2-2-2zm12 0c-1.1 0-2 .9-2 2s.9 2 2 2 2-.9 2-2-.9-2-2-2zm-6 0c-1.1 0-2 .9-2 2s.9 2 2 2 2-.9 2-2-.9-2-2-2z"/></svg></div><div class="row" style="top:726.8px"><div class="fz" style="left:0;width:95px"></div><div class="fz" style="left:2021px;width:164px"></div><div class="cb" style="left:17px;top:13px"></div><div class="c lk" style="left:112px">testfile.pdf</div><div class="c" style="left:396px">1</div><div class="badge">Ready for validation</div><div class="c" style="left:647px">20.08.2025 10:54:05</div><div class="c" style="left:845px">-</div><div class="c" style="left:992px">Invoice</div><div class="c" style="left:1119px">Test Polydocs</div><div class="c" style="left:1305px">-</div><div class="c" style="left:1486px">20.08.2025 10:54:21</div><div class="c" style="left:1683px">-</div><div class="c" style="left:1861px">Test Polydocs</div><svg class="ic" style="left:2079.700px;top:11.800px;width:24.600px;height:24.600px" viewBox="0 0 24 24"><g fill="#3c3c3c"><circle cx="12" cy="12" r="9.800"/><circle cx="21.30" cy="12.00" r="2.700"/><circle cx="20.05" cy="16.65" r="2.700"/><circle cx="16.65" cy="20.05" r="2.700"/><circle cx="12.00" cy="21.30" r="2.700"/><circle cx="7.35" cy="20.05" r="2.700"/><circle cx="3.95" cy="16.65" r="2.700"/><circle cx="2.70" cy="12.00" r="2.700"/><circle cx="3.95" cy="7.35" r="2.700"/><circle cx="7.35" cy="3.95" r="2.700"/><circle cx="12.00" cy="2.70" r="2.700"/><circle cx="16.65" cy="3.95" r="2.700"/><circle cx="20.05" cy="7.35" r="2.700"/></g><path d="M7 12.300L10.500 15.700L17.200 8.900" stroke="#979898" stroke-width="2.700" fill="none" stroke-linecap="round" stroke-linejoin="round"/></svg><svg class="ic" style="left:2111.0px;top:10.5px;width:27px;height:27px;" viewBox="0 0 24 24" fill="#3a3a3a"><path d="M6 10c-1.1 0-2 .9-2 2s.9 2 2 2 2-.9 2-2-.9-2-2-2zm12 0c-1.1 0-2 .9-2 2s.9 2 2 2 2-.9 2-2-.9-2-2-2zm-6 0c-1.1 0-2 .9-2 2s.9 2 2 2 2-.9 2-2-.9-2-2-2z"/></svg></div><div class="row" style="top:774.9px"><div class="fz" style="left:0;width:95px"></div><div class="fz" style="left:2021px;width:164px"></div><div class="cb" style="left:17px;top:13px"></div><div class="c lk" style="left:112px">multi_document_with...</div><div class="c" style="left:396px">1</div><div class="badge">Ready for validation</div><div class="c" style="left:647px">20.08.2025 10:53:08</div><div class="c" style="left:845px">-</div><div class="c" style="left:992px">Invoice</div><div class="c" style="left:1119px">Test Polydocs</div><div class="c" style="left:1305px">-</div><div class="c" style="left:1486px">20.08.2025 10:53:24</div><div class="c" style="left:1683px">-</div><div class="c" style="left:1861px">Test Polydocs</div><svg class="ic" style="left:2079.700px;top:11.800px;width:24.600px;height:24.600px" viewBox="0 0 24 24"><g fill="#3c3c3c"><circle cx="12" cy="12" r="9.800"/><circle cx="21.30" cy="12.00" r="2.700"/><circle cx="20.05" cy="16.65" r="2.700"/><circle cx="16.65" cy="20.05" r="2.700"/><circle cx="12.00" cy="21.30" r="2.700"/><circle cx="7.35" cy="20.05" r="2.700"/><circle cx="3.95" cy="16.65" r="2.700"/><circle cx="2.70" cy="12.00" r="2.700"/><circle cx="3.95" cy="7.35" r="2.700"/><circle cx="7.35" cy="3.95" r="2.700"/><circle cx="12.00" cy="2.70" r="2.700"/><circle cx="16.65" cy="3.95" r="2.700"/><circle cx="20.05" cy="7.35" r="2.700"/></g><path d="M7 12.300L10.500 15.700L17.200 8.900" stroke="#979898" stroke-width="2.700" fill="none" stroke-linecap="round" stroke-linejoin="round"/></svg><svg class="ic" style="left:2111.0px;top:10.5px;width:27px;height:27px;" viewBox="0 0 24 24" fill="#3a3a3a"><path d="M6 10c-1.1 0-2 .9-2 2s.9 2 2 2 2-.9 2-2-.9-2-2-2zm12 0c-1.1 0-2 .9-2 2s.9 2 2 2 2-.9 2-2-.9-2-2-2zm-6 0c-1.1 0-2 .9-2 2s.9 2 2 2 2-.9 2-2-.9-2-2-2z"/></svg></div><div class="row" style="top:823.0px"><div class="fz" style="left:0;width:95px"></div><div class="fz" style="left:2021px;width:164px"></div><div class="cb" style="left:17px;top:13px"></div><div class="c lk" style="left:112px">corrupted_document...</div><div class="c" style="left:396px">1</div><div class="badge">Ready for validation</div><div class="c" style="left:647px">20.08.2025 10:52:55</div><div class="c" style="left:845px">-</div><div class="c" style="left:992px">Invoice</div><div class="c" style="left:1119px">Test Polydocs</div><div class="c" style="left:1305px">-</div><div class="c" style="left:1486px">20.08.2025 10:53:07</div><div class="c" style="left:1683px">-</div><div class="c" style="left:1861px">Test Polydocs</div><svg class="ic" style="left:2079.700px;top:11.800px;width:24.600px;height:24.600px" viewBox="0 0 24 24"><g fill="#3c3c3c"><circle cx="12" cy="12" r="9.800"/><circle cx="21.30" cy="12.00" r="2.700"/><circle cx="20.05" cy="16.65" r="2.700"/><circle cx="16.65" cy="20.05" r="2.700"/><circle cx="12.00" cy="21.30" r="2.700"/><circle cx="7.35" cy="20.05" r="2.700"/><circle cx="3.95" cy="16.65" r="2.700"/><circle cx="2.70" cy="12.00" r="2.700"/><circle cx="3.95" cy="7.35" r="2.700"/><circle cx="7.35" cy="3.95" r="2.700"/><circle cx="12.00" cy="2.70" r="2.700"/><circle cx="16.65" cy="3.95" r="2.700"/><circle cx="20.05" cy="7.35" r="2.700"/></g><path d="M7 12.300L10.500 15.700L17.200 8.900" stroke="#979898" stroke-width="2.700" fill="none" stroke-linecap="round" stroke-linejoin="round"/></svg><svg class="ic" style="left:2111.0px;top:10.5px;width:27px;height:27px;" viewBox="0 0 24 24" fill="#3a3a3a"><path d="M6 10c-1.1 0-2 .9-2 2s.9 2 2 2 2-.9 2-2-.9-2-2-2zm12 0c-1.1 0-2 .9-2 2s.9 2 2 2 2-.9 2-2-.9-2-2-2zm-6 0c-1.1 0-2 .9-2 2s.9 2 2 2 2-.9 2-2-.9-2-2-2z"/></svg></div><div class="row" style="top:871.1px"><div class="fz" style="left:0;width:95px"></div><div class="fz" style="left:2021px;width:164px"></div><div class="cb" style="left:17px;top:13px"></div><div class="c lk" style="left:112px">handle_corrupted_file...</div><div class="c" style="left:396px">1</div><div class="badge">Ready for validation</div><div class="c" style="left:647px">20.08.2025 10:52:37</div><div class="c" style="left:845px">-</div><div class="c" style="left:992px">Invoice</div><div class="c" style="left:1119px">Test Polydocs</div><div class="c" style="left:1305px">-</div><div class="c" style="left:1486px">20.08.2025 10:52:50</div><div class="c" style="left:1683px">-</div><div class="c" style="left:1861px">Test Polydocs</div><svg class="ic" style="left:2079.700px;top:11.800px;width:24.600px;height:24.600px" viewBox="0 0 24 24"><g fill="#3c3c3c"><circle cx="12" cy="12" r="9.800"/><circle cx="21.30" cy="12.00" r="2.700"/><circle cx="20.05" cy="16.65" r="2.700"/><circle cx="16.65" cy="20.05" r="2.700"/><circle cx="12.00" cy="21.30" r="2.700"/><circle cx="7.35" cy="20.05" r="2.700"/><circle cx="3.95" cy="16.65" r="2.700"/><circle cx="2.70" cy="12.00" r="2.700"/><circle cx="3.95" cy="7.35" r="2.700"/><circle cx="7.35" cy="3.95" r="2.700"/><circle cx="12.00" cy="2.70" r="2.700"/><circle cx="16.65" cy="3.95" r="2.700"/><circle cx="20.05" cy="7.35" r="2.700"/></g><path d="M7 12.300L10.500 15.700L17.200 8.900" stroke="#979898" stroke-width="2.700" fill="none" stroke-linecap="round" stroke-linejoin="round"/></svg><svg class="ic" style="left:2111.0px;top:10.5px;width:27px;height:27px;" viewBox="0 0 24 24" fill="#3a3a3a"><path d="M6 10c-1.1 0-2 .9-2 2s.9 2 2 2 2-.9 2-2-.9-2-2-2zm12 0c-1.1 0-2 .9-2 2s.9 2 2 2 2-.9 2-2-.9-2-2-2zm-6 0c-1.1 0-2 .9-2 2s.9 2 2 2 2-.9 2-2-.9-2-2-2z"/></svg></div><div class="row" style="top:919.2px"><div class="fz" style="left:0;width:95px"></div><div class="fz" style="left:2021px;width:164px"></div><div class="cb" style="left:17px;top:13px"></div><div class="c lk" style="left:112px">move_email_after_im...</div><div class="c" style="left:396px">1</div><div class="badge">Ready for validation</div><div class="c" style="left:647px">20.08.2025 10:52:15</div><div class="c" style="left:845px">-</div><div class="c" style="left:992px">Invoice</div><div class="c" style="left:1119px">Test Polydocs</div><div class="c" style="left:1305px">-</div><div class="c" style="left:1486px">20.08.2025 10:52:29</div><div class="c" style="left:1683px">-</div><div class="c" style="left:1861px">Test Polydocs</div><svg class="ic" style="left:2079.700px;top:11.800px;width:24.600px;height:24.600px" viewBox="0 0 24 24"><g fill="#3c3c3c"><circle cx="12" cy="12" r="9.800"/><circle cx="21.30" cy="12.00" r="2.700"/><circle cx="20.05" cy="16.65" r="2.700"/><circle cx="16.65" cy="20.05" r="2.700"/><circle cx="12.00" cy="21.30" r="2.700"/><circle cx="7.35" cy="20.05" r="2.700"/><circle cx="3.95" cy="16.65" r="2.700"/><circle cx="2.70" cy="12.00" r="2.700"/><circle cx="3.95" cy="7.35" r="2.700"/><circle cx="7.35" cy="3.95" r="2.700"/><circle cx="12.00" cy="2.70" r="2.700"/><circle cx="16.65" cy="3.95" r="2.700"/><circle cx="20.05" cy="7.35" r="2.700"/></g><path d="M7 12.300L10.500 15.700L17.200 8.900" stroke="#979898" stroke-width="2.700" fill="none" stroke-linecap="round" stroke-linejoin="round"/></svg><svg class="ic" style="left:2111.0px;top:10.5px;width:27px;height:27px;" viewBox="0 0 24 24" fill="#3a3a3a"><path d="M6 10c-1.1 0-2 .9-2 2s.9 2 2 2 2-.9 2-2-.9-2-2-2zm12 0c-1.1 0-2 .9-2 2s.9 2 2 2 2-.9 2-2-.9-2-2-2zm-6 0c-1.1 0-2 .9-2 2s.9 2 2 2 2-.9 2-2-.9-2-2-2z"/></svg></div><div class="row" style="top:967.3px"><div class="fz" style="left:0;width:95px"></div><div class="fz" style="left:2021px;width:164px"></div><div class="cb" style="left:17px;top:13px"></div><div class="c lk" style="left:112px">test_google_client_20...</div><div class="c" style="left:396px">1</div><div class="badge">Ready for validation</div><div class="c" style="left:647px">20.08.2025 10:52:13</div><div class="c" style="left:845px">-</div><div class="c" style="left:992px">Invoice</div><div class="c" style="left:1119px">Test Polydocs</div><div class="c" style="left:1305px">-</div><div class="c" style="left:1486px">20.08.2025 10:52:29</div><div class="c" style="left:1683px">-</div><div class="c" style="left:1861px">Test Polydocs</div><svg class="ic" style="left:2079.700px;top:11.800px;width:24.600px;height:24.600px" viewBox="0 0 24 24"><g fill="#3c3c3c"><circle cx="12" cy="12" r="9.800"/><circle cx="21.30" cy="12.00" r="2.700"/><circle cx="20.05" cy="16.65" r="2.700"/><circle cx="16.65" cy="20.05" r="2.700"/><circle cx="12.00" cy="21.30" r="2.700"/><circle cx="7.35" cy="20.05" r="2.700"/><circle cx="3.95" cy="16.65" r="2.700"/><circle cx="2.70" cy="12.00" r="2.700"/><circle cx="3.95" cy="7.35" r="2.700"/><circle cx="7.35" cy="3.95" r="2.700"/><circle cx="12.00" cy="2.70" r="2.700"/><circle cx="16.65" cy="3.95" r="2.700"/><circle cx="20.05" cy="7.35" r="2.700"/></g><path d="M7 12.300L10.500 15.700L17.200 8.900" stroke="#979898" stroke-width="2.700" fill="none" stroke-linecap="round" stroke-linejoin="round"/></svg><svg class="ic" style="left:2111.0px;top:10.5px;width:27px;height:27px;" viewBox="0 0 24 24" fill="#3a3a3a"><path d="M6 10c-1.1 0-2 .9-2 2s.9 2 2 2 2-.9 2-2-.9-2-2-2zm12 0c-1.1 0-2 .9-2 2s.9 2 2 2 2-.9 2-2-.9-2-2-2zm-6 0c-1.1 0-2 .9-2 2s.9 2 2 2 2-.9 2-2-.9-2-2-2z"/></svg></div><div class="row" style="top:1015.4px"><div class="fz" style="left:0;width:95px"></div><div class="fz" style="left:2021px;width:164px"></div><div class="cb" style="left:17px;top:13px"></div><div class="c lk" style="left:112px">test_microsoft_client...</div><div class="c" style="left:396px">1</div><div class="badge">Ready for validation</div><div class="c" style="left:647px">20.08.2025 10:51:53</div><div class="c" style="left:845px">-</div><div class="c" style="left:992px">Invoice</div><div class="c" style="left:1119px">Test Polydocs</div><div class="c" style="left:1305px">-</div><div class="c" style="left:1486px">20.08.2025 10:52:11</div><div class="c" style="left:1683px">-</div><div class="c" style="left:1861px">Test Polydocs</div><svg class="ic" style="left:2079.700px;top:11.800px;width:24.600px;height:24.600px" viewBox="0 0 24 24"><g fill="#3c3c3c"><circle cx="12" cy="12" r="9.800"/><circle cx="21.30" cy="12.00" r="2.700"/><circle cx="20.05" cy="16.65" r="2.700"/><circle cx="16.65" cy="20.05" r="2.700"/><circle cx="12.00" cy="21.30" r="2.700"/><circle cx="7.35" cy="20.05" r="2.700"/><circle cx="3.95" cy="16.65" r="2.700"/><circle cx="2.70" cy="12.00" r="2.700"/><circle cx="3.95" cy="7.35" r="2.700"/><circle cx="7.35" cy="3.95" r="2.700"/><circle cx="12.00" cy="2.70" r="2.700"/><circle cx="16.65" cy="3.95" r="2.700"/><circle cx="20.05" cy="7.35" r="2.700"/></g><path d="M7 12.300L10.500 15.700L17.200 8.900" stroke="#979898" stroke-width="2.700" fill="none" stroke-linecap="round" stroke-linejoin="round"/></svg><svg class="ic" style="left:2111.0px;top:10.5px;width:27px;height:27px;" viewBox="0 0 24 24" fill="#3a3a3a"><path d="M6 10c-1.1 0-2 .9-2 2s.9 2 2 2 2-.9 2-2-.9-2-2-2zm12 0c-1.1 0-2 .9-2 2s.9 2 2 2 2-.9 2-2-.9-2-2-2zm-6 0c-1.1 0-2 .9-2 2s.9 2 2 2 2-.9 2-2-.9-2-2-2z"/></svg></div></div><div class="abs" style="left:95px;top:1056.600px;width:2185px;height:57.500px;background:#9d9d9d"></div><div class="abs" style="left:2040px;top:1057px;width:1px;height:57px;background:#939393"></div><div class="t" style="left:1795px;top:1075.800px;color:#4a4a4a">Documents per Page:</div><div class="t" style="left:1965px;top:1075.800px;color:#1d1d1d">50</div><svg class="ic" style="left:1991.0px;top:1071.0px;width:29px;height:29px;" viewBox="0 0 24 24" fill="#3c3c3c"><path d="M7 10l5 5 5-5z"/></svg><svg class="ic" style="left:2063.0px;top:1072.0px;width:27px;height:27px;" viewBox="0 0 24 24" fill="#1d5a76"><path d="M18.41 16.59L13.82 12l4.59-4.59L17 6l-6 6 6 6zM6 6h2v12H6z"/></svg><svg class="ic" style="left:2099.0px;top:1072.0px;width:27px;height:27px;" viewBox="0 0 24 24" fill="#1d5a76"><path d="M15.41 7.41L14 6l-6 6 6 6 1.41-1.41L10.83 12z"/></svg><div class="t" style="left:2143px;top:1075.800px;color:#4a4a4a;word-spacing:1px">1 / 4</div><svg class="ic" style="left:2194.0px;top:1072.0px;width:27px;height:27px;" viewBox="0 0 24 24" fill="#1d5a76"><path d="M10 6L8.59 7.41 13.17 12l-4.58 4.59L10 18l6-6z"/></svg><svg class="ic" style="left:2230.0px;top:1072.0px;width:27px;height:27px;" viewBox="0 0 24 24" fill="#1d5a76"><path d="M5.59 7.41L10.18 12l-4.59 4.59L7 18l6-6-6-6zM16 6h2v12h-2z"/></svg><div class="abs" style="left:104px;top:1139.500px;width:2166px;height:1.200px;background:#8a8a8a"></div><div class="abs" style="left:816px;top:314px;width:674px;height:534.500px;background:#fff;border-radius:5px;box-shadow:0 2px 6px rgba(0,0,0,.22);overflow:hidden"><div class="abs" style="left:0;top:0;width:100%;height:60px;background:#238ab2"></div></div><div class="t" style="left:831px;top:333.100px;font-size:18.400px;font-weight:bold;color:#fff;line-height:22px">Create new Dashboard</div><svg class="ic" style="left:1441.0px;top:329.5px;width:29px;height:29px;" viewBox="0 0 24 24" fill="#fff"><path d="M19 6.41L17.59 5 12 10.59 6.41 5 5 6.41 10.59 12 5 17.59 6.41 19 12 13.41 17.59 19 19 17.59 13.41 12z"/></svg><div class="abs" style="left:835.400px;top:394px;width:635.400px;height:47.800px;border:1px solid #c2c2c2;border-radius:4.500px;background:#fff;box-shadow:0 0 0 .5px #dcdcdc"></div><div class="t" style="left:850px;top:407.800px;color:#333">My-Dashboard</div><div class="t" style="left:836px;top:473.700px;color:#151515;letter-spacing:-.12px">Who can see this dashboard?</div><div class="abs" style="left:835.600px;top:506px;width:24px;height:24px;border-radius:50%;border:1.800px solid #727272"></div><div class="t" style="left:868px;top:508.7px;color:#151515;letter-spacing:0px">Visible only to me</div><div class="abs" style="left:835.600px;top:550.5px;width:24px;height:24px;border-radius:50%;border:1.800px solid #727272"></div><div class="t" style="left:868px;top:553.2px;color:#151515;letter-spacing:0.05px">Visible to all users</div><div class="abs" style="left:835.600px;top:595px;width:24px;height:24px;border-radius:50%;border:2px solid #238ab2"></div><div class="abs" style="left:841.600px;top:601px;width:12px;height:12px;border-radius:50%;background:#238ab2"></div><div class="t" style="left:868px;top:597.7px;color:#151515;letter-spacing:-0.17px">Share with Groups and Users</div><div class="abs" style="left:835.400px;top:639.4px;width:635.400px;height:53.5px;border:1px solid #c2c2c2;border-radius:4.500px;background:#fff;box-shadow:0 0 0 .5px #dcdcdc"></div><div class="t" style="left:850px;top:645.4px;font-size:12.600px;color:#666;line-height:16px">Groups</div><div class="abs" style="left:854.900px;top:660.9px;width:81px;height:24.900px;border-radius:13px;background:#ececec"></div><div class="t" style="left:862.200px;top:663.3px;color:#2a2a2a;font-size:16.200px;letter-spacing:-.6px">TEST1</div><svg class="ic" style="left:913.6px;top:662.6px;width:21px;height:21px;" viewBox="0 0 24 24" fill="#9e9e9e"><path d="M12 2C6.47 2 2 6.47 2 12s4.47 10 10 10 10-4.47 10-10S17.53 2 12 2zm5 13.59L15.59 17 12 13.41 8.41 17 7 15.59 10.59 12 7 8.41 8.41 7 12 10.59 15.59 7 17 8.41 13.41 12 17 15.59z"/></svg><svg class="ic" style="left:1427.5px;top:648.6px;width:29px;height:29px;" viewBox="0 0 24 24" fill="#555"><path d="M7 10l5 5 5-5z"/></svg><div class="abs" style="left:835.400px;top:712.9px;width:635.400px;height:54px;border:1px solid #c2c2c2;border-radius:4.500px;background:#fff;box-shadow:0 0 0 .5px #dcdcdc"></div><div class="t" style="left:850px;top:718.9px;font-size:12.600px;color:#666;line-height:16px">Select User</div><div class="abs" style="left:854.900px;top:734.4px;width:103.3px;height:24.900px;border-radius:13px;background:#ececec"></div><div class="t" style="left:862.200px;top:736.8px;color:#2a2a2a;">Auto Test</div><svg class="ic" style="left:935.9px;top:736.1px;width:21px;height:21px;" viewBox="0 0 24 24" fill="#9e9e9e"><path d="M12 2C6.47 2 2 6.47 2 12s4.47 10 10 10 10-4.47 10-10S17.53 2 12 2zm5 13.59L15.59 17 12 13.41 8.41 17 7 15.59 10.59 12 7 8.41 8.41 7 12 10.59 15.59 7 17 8.41 13.41 12 17 15.59z"/></svg><svg class="ic" style="left:1427.5px;top:722.1px;width:29px;height:29px;" viewBox="0 0 24 24" fill="#555"><path d="M7 10l5 5 5-5z"/></svg><svg class="ic" style="left:1395.75px;top:648.25px;width:29.5px;height:29.5px;" viewBox="0 0 24 24" fill="#a9a9a9"><path d="M12 2C6.47 2 2 6.47 2 12s4.47 10 10 10 10-4.47 10-10S17.53 2 12 2zm5 13.59L15.59 17 12 13.41 8.41 17 7 15.59 10.59 12 7 8.41 8.41 7 12 10.59 15.59 7 17 8.41 13.41 12 17 15.59z"/></svg><div class="abs" style="left:1307.200px;top:795.500px;width:76.700px;height:43.200px;border-radius:7.500px;background:#9e9e9e"></div><div class="t med" style="left:1307.200px;top:806.700px;width:76.700px;text-align:center;font-size:16.200px;color:#fff">Cancel</div><div class="abs" style="left:1393.800px;top:795.500px;width:77.200px;height:43.200px;border-radius:7.500px;background:#238ab2"></div><div class="t med" style="left:1393.800px;top:806.700px;width:76.700px;text-align:center;font-size:16.200px;color:#fff">Save</div><svg class="ic" style="left:1500px;top:790px;width:185px;height:56px" viewBox="0 0 185 56"><path d="M3.200 27.500L48 5.500V23.400H177V32.800H48V50.200z" fill="#00ffff"/></svg></div></body></html>
